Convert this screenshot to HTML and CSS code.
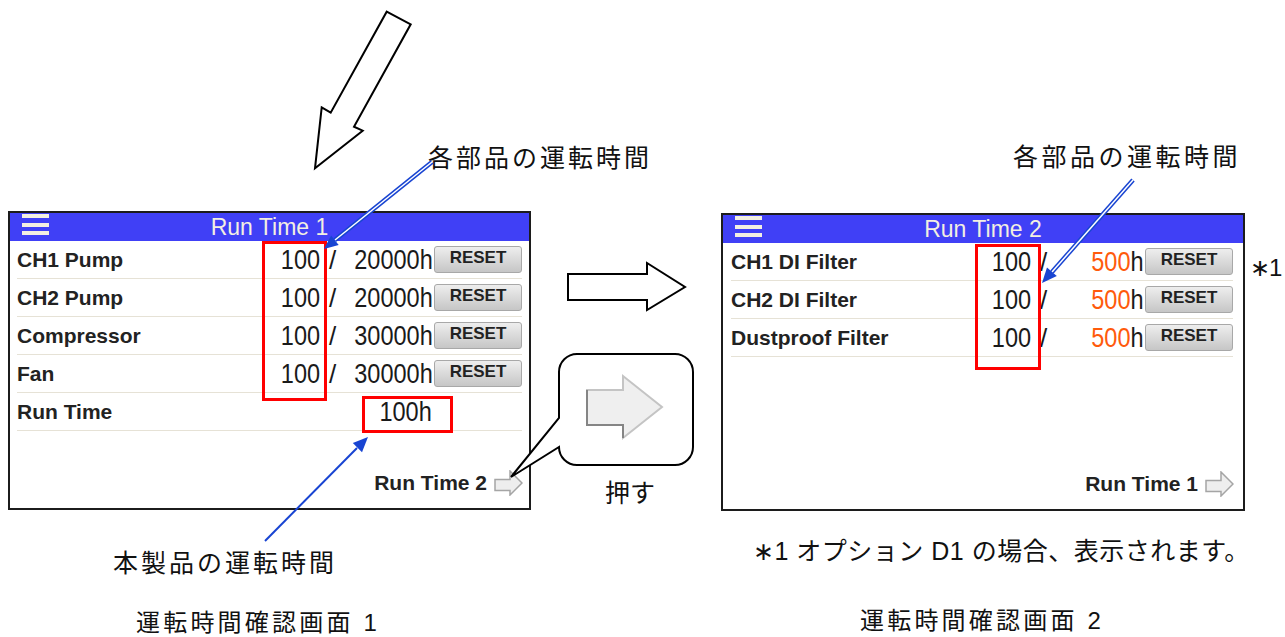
FILE: index.html
```html
<!DOCTYPE html>
<html>
<head>
  <title>運転時間確認画面</title>
  <link rel="stylesheet" href="styles.css">
</head>
<body>
  <div class="canvas">

    <!-- screen 1 -->
    <div class="panel panel-1">
      <div class="panel-head">
        <span class="menu"><i></i><i></i><i></i></span>
        <span class="title">Run Time 1</span>
      </div>
      <div class="rows">
        <div class="row">
          <span class="label">CH1 Pump</span>
          <span class="val">100</span><span class="slash">/</span><span class="val">20000h</span>
          <button class="reset">RESET</button>
        </div>
        <div class="row">
          <span class="label">CH2 Pump</span>
          <span class="val">100</span><span class="slash">/</span><span class="val">20000h</span>
          <button class="reset">RESET</button>
        </div>
        <div class="row">
          <span class="label">Compressor</span>
          <span class="val">100</span><span class="slash">/</span><span class="val">30000h</span>
          <button class="reset">RESET</button>
        </div>
        <div class="row">
          <span class="label">Fan</span>
          <span class="val">100</span><span class="slash">/</span><span class="val">30000h</span>
          <button class="reset">RESET</button>
        </div>
        <div class="row">
          <span class="label">Run Time</span>
          <span class="val run">100h</span>
        </div>
      </div>
      <div class="panel-foot">
        <span>Run Time 2</span>
        <svg class="next" viewBox="0 0 29 26" width="29" height="26">
          <polygon points="1,9.5 16,9.5 16,1 28,13 16,25 16,20.5 1,20.5" />
        </svg>
      </div>
    </div>

    <!-- screen 2 -->
    <div class="panel panel-2">
      <div class="panel-head">
        <span class="menu"><i></i><i></i><i></i></span>
        <span class="title">Run Time 2</span>
      </div>
      <div class="rows">
        <div class="row">
          <span class="label">CH1 DI Filter</span>
          <span class="val">100</span><span class="slash">/</span><span class="val"><em>500</em>h</span>
          <button class="reset">RESET</button>
        </div>
        <div class="row">
          <span class="label">CH2 DI Filter</span>
          <span class="val">100</span><span class="slash">/</span><span class="val"><em>500</em>h</span>
          <button class="reset">RESET</button>
        </div>
        <div class="row">
          <span class="label">Dustproof Filter</span>
          <span class="val">100</span><span class="slash">/</span><span class="val"><em>500</em>h</span>
          <button class="reset">RESET</button>
        </div>
      </div>
      <div class="panel-foot">
        <span>Run Time 1</span>
        <svg class="next" viewBox="0 0 29 26" width="29" height="26">
          <polygon points="1,9.5 16,9.5 16,1 28,13 16,25 16,20.5 1,20.5" />
        </svg>
      </div>
    </div>

    <!-- notes -->
    <div class="note note-parts-1">各部品の運転時間</div>
    <div class="note note-parts-2">各部品の運転時間</div>
    <div class="note note-total">本製品の運転時間</div>
    <div class="note note-push">押す</div>
    <div class="note note-star">∗1</div>
    <div class="note note-option">∗1 オプション D1 の場合、表示されます。</div>
    <div class="note caption caption-1">運転時間確認画面 1</div>
    <div class="note caption caption-2">運転時間確認画面 2</div>

    <!-- arrows, leader lines, highlight boxes -->
    <svg class="overlay" width="1285" height="637" viewBox="0 0 1285 637">
      <polygon class="outline" points="386.7,11.7 410.7,24.3 354,126.7 362.7,130.7 315,168.3 321.7,107.3 330.7,112.7" />
      <polygon class="outline" points="568,274 647,274 647,263 685,287 647,310 647,300 568,300" />

      <path class="outline" d="M577,354 H675 A18,18 0 0 1 693,372 V447 A18,18 0 0 1 675,465 H577 A18,18 0 0 1 559,447 L511,477 L559,418 V372 A18,18 0 0 1 577,354 Z" />
      <polygon class="push-arrow" points="587,390 623,390 623,376 662,407 623,438 623,425 587,425" />
      <polyline class="push-shade" points="587,390 587,425 623,425 623,438" />

      <rect class="mark" x="263.5" y="242.5" width="62" height="157" />
      <rect class="mark" x="363.5" y="397.5" width="88" height="34" />
      <rect class="mark" x="976.5" y="245.5" width="63" height="123" />

      <line class="lead-out" x1="432" y1="162" x2="335" y2="240" />
      <line class="lead-in" x1="432" y1="162" x2="335" y2="240" />
      <polygon class="head" points="324,249 338.7,244.9 331.1,235.5" />

      <line class="lead-out" x1="1133" y1="180" x2="1052" y2="272" />
      <line class="lead-in" x1="1133" y1="180" x2="1052" y2="272" />
      <polygon class="head" points="1042,283 1056.8,276 1047,267.4" />

      <line class="lead" x1="265" y1="541" x2="357" y2="448" />
      <polygon class="head" points="368,437 362,452.2 352.8,443.1" />
    </svg>
  </div>
</body>
</html>
```

FILE: styles.css
```css
body {
  margin: 0;
  background-color: #fff;
}

.canvas {
  position: relative;
  width: 1285px;
  height: 637px;
  overflow: hidden;
  background-color: #fff;
  font-family: "Liberation Sans", "Noto Sans CJK JP", sans-serif;
  color: #111;
}

/* screens */

.panel {
  position: absolute;
  box-sizing: border-box;
  display: flex;
  flex-direction: column;
  border: 2px solid #1c1c1c;
  background-color: #fff;
  font-family: "Liberation Sans", Arial, sans-serif;
  color: #222;
}

.panel-1 {
  left: 8px;
  top: 211px;
  width: 523px;
  height: 299px;
  --pad-l: 7px;
  --pad-r: 7px;
}

.panel-2 {
  left: 721px;
  top: 213px;
  width: 524px;
  height: 298px;
  --pad-l: 8px;
  --pad-r: 10px;
}

.panel-head {
  display: grid;
  grid-template-columns: 1fr auto 1fr;
  align-items: center;
  height: 28px;
  background-color: #4040f6;
  color: #f3efe2;
}

.menu {
  display: flex;
  flex-direction: column;
  gap: 4.5px;
  width: 27px;
  margin-left: 12px;
  align-self: start;
  margin-top: 1px;
}

.menu i {
  display: block;
  height: 4px;
  background-color: #f3efe2;
}

.title {
  font-size: 23px;
  line-height: 28px;
}

.rows {
  padding: 0 var(--pad-r) 0 var(--pad-l);
}

.row {
  display: grid;
  grid-template-columns: 1fr 60px 22px 90px 88px;
  align-items: center;
  height: 38px;
  box-sizing: border-box;
  border-bottom: 1px solid #e6e2d6;
}

.label {
  font-size: 21px;
  font-weight: bold;
}

.val {
  justify-self: end;
  display: inline-block;
  font-size: 28px;
  line-height: 30px;
  color: #1a1a1a;
  transform: scaleX(0.84);
  transform-origin: right center;
  padding-right: 2px;
}

.val em {
  font-style: normal;
  color: #ff5a0c;
}

.run {
  grid-column: 2 / 5;
  padding-right: 3px;
}

.slash {
  font-size: 26px;
  line-height: 30px;
  padding-left: 7px;
  color: #1a1a1a;
}

.reset {
  height: 27px;
  padding: 0 0 3px;
  border: 1px solid #a8a8a8;
  border-radius: 3px;
  background: linear-gradient(#eeeeee, #c6c6c6);
  font-family: "Liberation Sans", Arial, sans-serif;
  font-size: 17px;
  font-weight: bold;
  color: #222;
}

.panel-foot {
  display: flex;
  justify-content: flex-end;
  align-items: center;
  gap: 7px;
  margin-top: auto;
  padding: 0 calc(var(--pad-r) - 1px) 12px 0;
  font-size: 21px;
  font-weight: bold;
  line-height: 26px;
}

.next polygon {
  fill: #eeeeee;
  stroke: #a5a5a5;
  stroke-width: 1.5;
}

/* notes around the screens */

.note {
  position: absolute;
  font-size: 25px;
  line-height: 26px;
  letter-spacing: 3px;
  white-space: nowrap;
}

.note-parts-1 { left: 428px; top: 145px; }
.note-parts-2 { left: 1013px; top: 144px; letter-spacing: 3.5px; }
.note-total { left: 113px; top: 550px; }
.note-push { left: 605px; top: 480px; letter-spacing: 0; }
.note-star { left: 1250px; top: 255px; letter-spacing: -1px; font-size: 24px; }
.note-option { left: 753px; top: 538px; letter-spacing: 0.5px; }

.caption {
  font-size: 24px;
  line-height: 24px;
  letter-spacing: 3.2px;
}

.caption-1 { left: 136px; top: 611px; }
.caption-2 { left: 860px; top: 609px; }

/* drawing layer */

.overlay {
  position: absolute;
  left: 0;
  top: 0;
  pointer-events: none;
}

.outline {
  fill: #fff;
  stroke: #000;
  stroke-width: 2;
  stroke-linejoin: miter;
}

.push-arrow {
  fill: #efefef;
  stroke: #c4c4c4;
  stroke-width: 2;
}

.push-shade {
  fill: none;
  stroke: #858585;
  stroke-width: 2;
}

.mark {
  fill: none;
  stroke: #ff0000;
  stroke-width: 3;
}

.lead-out {
  stroke: #1844d2;
  stroke-width: 4.5;
}

.lead-in {
  stroke: #fff;
  stroke-width: 1.5;
}

.lead {
  stroke: #1844d2;
  stroke-width: 2;
}

.head {
  fill: #1844d2;
}
```
